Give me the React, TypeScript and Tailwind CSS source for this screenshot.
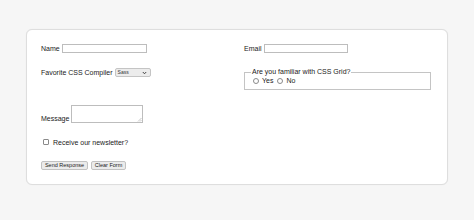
export default function App() {
  return (
    <div className="h-[220px] w-[474px] bg-[#f6f6f6] pt-[29px] pl-[26px] font-['Liberation_Sans',Arial,sans-serif] text-[7px] leading-none text-[#1a1a1a]">
      <form className="h-[156px] w-[422px] rounded-[6px] border border-[#dedede] bg-white px-[14px] pt-[14px] shadow-[0_0_1px_rgba(0,0,0,0.08)]">
        <div className="grid grid-cols-[189px_189px] gap-x-[14px] gap-y-[15px]">
          {/* row 1 */}
          <label className="flex h-[9px] items-center gap-[2px]">
            <span>Name</span>
            <input className="h-[9px] w-[85px] border border-[#bdbdbd] bg-white outline-none" />
          </label>
          <label className="flex h-[9px] items-center gap-[2px]">
            <span>Email</span>
            <input className="h-[9px] w-[84px] border border-[#bdbdbd] bg-white outline-none" />
          </label>

          {/* row 2 */}
          <div className="flex h-[9px] items-center gap-[2px]">
            <span>Favorite CSS Compiler</span>
            <div className="flex h-[9px] w-[36px] items-center justify-between rounded-[2px] border border-[#c4c4c4] bg-[#ececec] pl-[2px] pr-[3px] text-[5px] text-[#333]">
              <span>Sass</span>
              <svg width="5" height="4" viewBox="0 0 5 4" fill="none">
                <path d="M0.8 1 L2.5 2.8 L4.2 1" stroke="#333" strokeWidth="0.9" />
              </svg>
            </div>
          </div>
          <fieldset className="h-[22px] w-[187px] border border-[#c4c4c4] px-[6px]">
            <legend className="px-[1px] leading-[8px]">Are you familiar with CSS Grid?</legend>
            <div className="mt-[1px] flex items-center">
              <span className="ml-[2px] h-[6px] w-[6px] rounded-full border border-[#8a8a8a] bg-white" />
              <span className="ml-[3px]">Yes</span>
              <span className="ml-[4px] h-[6px] w-[6px] rounded-full border border-[#8a8a8a] bg-white" />
              <span className="ml-[3px]">No</span>
            </div>
          </fieldset>

          {/* row 3 */}
          <label className="col-span-2 flex h-[18px] items-end gap-[2px]">
            <span className="mb-[1px]">Message</span>
            <span className="relative h-[18px] w-[72px]">
              <textarea className="block h-[18px] w-[72px] resize-none border border-[#bdbdbd] bg-white outline-none" />
              <svg className="absolute right-[1px] bottom-[1px]" width="5" height="5" viewBox="0 0 5 5">
                <path d="M1 4.5 L4.5 1 M3 4.5 L4.5 3" stroke="#b0b0b0" strokeWidth="0.7" />
              </svg>
            </span>
          </label>

          {/* row 4 */}
          <label className="col-span-2 flex h-[8px] items-center">
            <span className="ml-[2px] h-[6px] w-[6px] rounded-[1px] border border-[#8a8a8a] bg-white" />
            <span className="ml-[4px]">Receive our newsletter?</span>
          </label>

          {/* row 5 */}
          <div className="col-span-2 flex h-[9px] gap-[3px]">
            <button type="button" className="h-[9px] w-[47px] rounded-[2px] border border-[#c2c2c2] bg-[#ebebeb] text-[5.5px] leading-none text-[#222]">
              Send Response
            </button>
            <button type="button" className="h-[9px] w-[35px] rounded-[2px] border border-[#c2c2c2] bg-[#ebebeb] text-[5.5px] leading-none text-[#222]">
              Clear Form
            </button>
          </div>
        </div>
      </form>
    </div>
  );
}
